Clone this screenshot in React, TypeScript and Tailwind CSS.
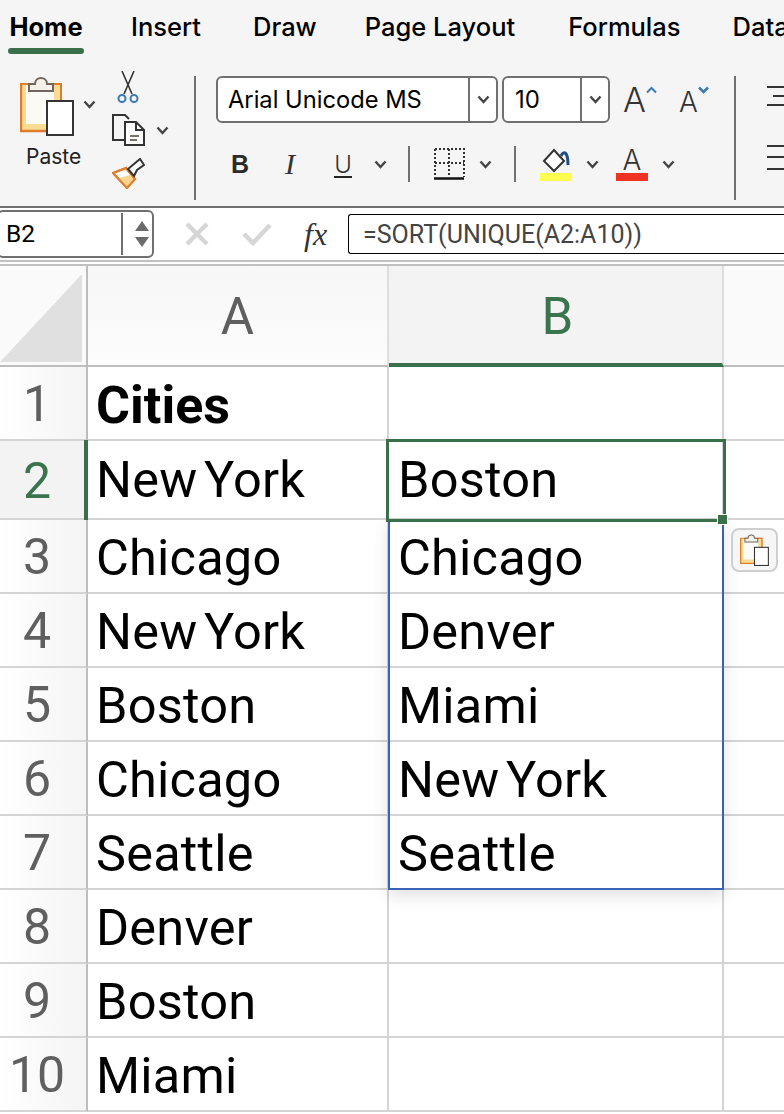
import React from "react";

const Chevron = ({ className = "" }: { className?: string }) => (
  <svg width="13" height="9" viewBox="0 0 13 9" className={className} fill="none">
    <path d="M1.5 1.5 L6.5 7 L11.5 1.5" stroke="#444" strokeWidth="2.4" />
  </svg>
);

const PasteIcon = ({ w, h }: { w: number; h: number }) => (
  <svg width={w} height={h} viewBox="0 0 54 60" fill="none" className="block">
    <rect x="1" y="8" width="40" height="47" fill="#fbfaf4" stroke="#e0802f" strokeWidth="2" />
    <path d="M2 9 H6 V48 H40 V54 H2 Z" fill="#f9dc93" />
    <path d="M34 9 H40 V26 H34 Z" fill="#f9dc93" />
    <path d="M1 8 V55 H41" stroke="#df7c2c" strokeWidth="2.4" />
    <path d="M34 8 H41 V25" stroke="#df7c2c" strokeWidth="2" />
    <path d="M9 15 V8 H15 C15 0 27 0 27 8 H33 V15 Z" fill="#f5f1ea" stroke="#70665d" strokeWidth="2" />
    <rect x="27" y="25" width="26" height="34" fill="#fff" stroke="#333" strokeWidth="2" />
  </svg>
);

const Scissors = () => (
  <svg width="22" height="34" viewBox="0 0 22 34" fill="none" className="block">
    <path d="M5 0 L15 23 M17 0 L7 23" stroke="#333" strokeWidth="1.6" />
    <circle cx="5" cy="27.500" r="3.500" stroke="#3b79b7" strokeWidth="2" />
    <circle cx="17" cy="27.500" r="3.500" stroke="#3b79b7" strokeWidth="2" />
  </svg>
);

const CopyIcon = () => (
  <svg width="33" height="33" viewBox="0 0 33 33" fill="none" className="block">
    <path d="M12 26 H1 V1 H13 L17 5" stroke="#333" strokeWidth="2" />
    <path d="M13 8 H24 L32 16 V31 H13 Z" fill="#fff" stroke="#333" strokeWidth="2" />
    <path d="M24 8 V16 H32" stroke="#333" strokeWidth="2" />
    <path d="M18 22 H27 M18 26 H25" stroke="#7a7065" strokeWidth="2" />
  </svg>
);

const Brush = () => (
  <svg width="33" height="31" viewBox="0 0 33 31" fill="none" className="block">
    <path d="M1 15 L14 10 L23 21 L15 30 Z" fill="#fff" stroke="#e07f2e" strokeWidth="2" />
    <path d="M7 20 L18 17 L22 21 L15 29 Z" fill="#fbd48e" />
    <path d="M1 15 L14 10 L23 21 L15 30 Z" stroke="#e07f2e" strokeWidth="2" />
    <path d="M16 11 L22 18 L25 12 L32 7 L28 1 L22 6 Z" fill="#fff" stroke="#333" strokeWidth="2" />
  </svg>
);

const BorderIcon = () => (
  <svg width="32" height="32" viewBox="0 0 32 32" fill="none" className="block">
    <path d="M2 1 H31 V29 M2 1 V29 M2 15 H31 M16 1 V29" stroke="#333" strokeWidth="2" strokeDasharray="2 2" />
    <path d="M1 30.500 H31" stroke="#111" strokeWidth="2.500" />
  </svg>
);

const FillIcon = () => (
  <svg width="28" height="26" viewBox="0 0 28 26" fill="none" className="block">
    <path d="M2 13 L12 2 L22 13 L12 23 Z" fill="#fff" stroke="#333" strokeWidth="2" />
    <path d="M19 8 C22 2 26 4 26 17" stroke="#1f4e86" strokeWidth="3" />
  </svg>
);

const Sep = ({ className = "" }: { className?: string }) => <div className={`w-[2px] bg-[#707070] ${className}`} />;

const RibbonTab = ({ label, className }: { label: string; className: string }) => (
  <span className={`text-[25.500px] leading-[30px] font-medium text-black whitespace-nowrap shrink-0 ${className}`}>{label}</span>
);

const Ribbon = () => (
  <div className="h-[206px] bg-[#f5f5f5] overflow-hidden font-['Inter',sans-serif]">
    <div className="flex h-[54px] items-start pt-[12px]">
      <div className="ml-[8px] w-[76px] shrink-0 flex flex-col items-center">
        <span className="text-[25.500px] leading-[30px] font-bold text-black">Home</span>
        <div className="mt-[6px] h-[6px] w-[76px] rounded-full bg-[#3a7049]" />
      </div>
      <RibbonTab label="Insert" className="ml-[47px]" />
      <RibbonTab label="Draw" className="ml-[52px]" />
      <RibbonTab label="Page Layout" className="ml-[48px]" />
      <RibbonTab label="Formulas" className="ml-[53px]" />
      <RibbonTab label="Data" className="ml-[52px]" />
    </div>
    <div className="flex items-start pt-[22px]">
      <div className="flex w-[194px] h-[124px] shrink-0">
        <div className="ml-[20px] w-[62px] shrink-0 flex flex-col">
          <PasteIcon w={54} h={60} />
          <span className="ml-[6px] mt-[8px] text-[21px] leading-[26px] text-[#222]">Paste</span>
        </div>
        <Chevron className="mt-[24px] ml-[1px] shrink-0" />
        <div className="ml-[16px] flex flex-col">
          <div className="ml-[5px] -mt-[5px]"><Scissors /></div>
          <div className="flex items-center mt-[9px]">
            <CopyIcon />
            <Chevron className="ml-[11px]" />
          </div>
          <div className="mt-[11px]"><Brush /></div>
        </div>
      </div>
      <Sep className="h-[124px] shrink-0" />
      <div className="ml-[20px] flex flex-col w-[518px] shrink-0">
        <div className="flex items-center h-[47px]">
          <div className="flex h-[47px] w-[282px] rounded-[6px] border-2 border-[#707070] bg-white">
            <span className="flex-1 pl-[10px] text-[23.700px] leading-[43px] text-black whitespace-nowrap overflow-hidden">Arial Unicode MS</span>
            <div className="w-[28px] border-l-2 border-[#707070] flex items-center justify-center"><Chevron /></div>
          </div>
          <div className="ml-[4px] flex h-[47px] w-[108px] rounded-[6px] border-2 border-[#707070] bg-white">
            <span className="flex-1 pl-[11px] text-[24px] leading-[43px] text-black">10</span>
            <div className="w-[28px] border-l-2 border-[#707070] flex items-center justify-center"><Chevron /></div>
          </div>
          <div className="ml-[13px] flex items-start h-[30px]">
            <span className="text-[34px] leading-[30px] font-light text-[#333]">A</span>
            <svg width="11" height="8" viewBox="0 0 11 8" fill="none" className="mt-[1px]"><path d="M1 6.500 L5.500 2 L10 6.500" stroke="#3b79b7" strokeWidth="2" /></svg>
          </div>
          <div className="ml-[22px] flex items-start h-[30px]">
            <span className="text-[28px] leading-[34px] font-light text-[#333]">A</span>
            <svg width="11" height="8" viewBox="0 0 11 8" fill="none" className="mt-[1px]"><path d="M1 1.500 L5.500 6 L10 1.500" stroke="#3b79b7" strokeWidth="2.500" /></svg>
          </div>
        </div>
        <div className="flex items-center h-[36px] mt-[23px]">
          <span className="ml-[15px] w-[18px] font-['Liberation_Sans',sans-serif] text-[25px] leading-[30px] font-bold text-[#2b2b2b]">B</span>
          <span className="ml-[36px] w-[16px] font-['Liberation_Serif',serif] text-[30px] leading-[30px] italic text-[#333]">I</span>
          <span className="ml-[33px] mt-[3px] w-[18px] text-[24px] leading-[23px] font-light text-[#333] border-b-2 border-[#222] h-[25px] flex justify-center">U</span>
          <Chevron className="ml-[22px]" />
          <Sep className="ml-[21px] h-[36px]" />
          <div className="ml-[23px]"><BorderIcon /></div>
          <Chevron className="ml-[14px]" />
          <Sep className="ml-[22px] h-[36px]" />
          <div className="ml-[24px] w-[32px] flex flex-col items-center">
            <FillIcon />
            <div className="h-[8px] w-[32px] bg-[#fdfd51] -mt-[1px]" />
          </div>
          <Chevron className="ml-[14px]" />
          <div className="ml-[17px] w-[32px] flex flex-col items-center">
            <span className="text-[28px] leading-[26px] font-light text-[#333]">A</span>
            <div className="h-[8px] w-[32px] bg-[#ee3224]" />
          </div>
          <Chevron className="ml-[14px]" />
        </div>
      </div>
      <Sep className="h-[124px] shrink-0" />
      <div className="ml-[31px] flex flex-col">
        <svg width="20" height="24" viewBox="0 0 20 24" fill="none" className="mt-[8px]"><path d="M0 3 H20 M6 12 H20 M0 21 H20" stroke="#333" strokeWidth="2" /></svg>
        <svg width="20" height="28" viewBox="0 0 20 28" fill="none" className="mt-[36px]"><path d="M0 2 H20 M0 13 H20 M0 25 H20" stroke="#333" strokeWidth="2" /></svg>
      </div>
    </div>
  </div>
);

const FormulaBar = () => (
  <div className="h-[60px] bg-white border-t-2 border-[#707070] flex flex-col overflow-hidden">
    <div className="flex h-[52px] items-center shrink-0 overflow-hidden">
      <div className="-ml-[3px] w-[157px] h-[48px] shrink-0 flex rounded-[6px] border-2 border-[#707070] bg-white">
        <span className="w-[124px] pl-[7px] font-['Roboto',sans-serif] text-[24.500px] leading-[42px] text-black border-r-2 border-[#707070] my-[1px]">B2</span>
        <div className="flex-1 flex flex-col items-center justify-center gap-[6px] pl-[8px]">
          <svg width="14" height="10" viewBox="0 0 14 10"><path d="M7 0 L14 10 H0 Z" fill="#6b6b6b" /></svg>
          <svg width="14" height="10" viewBox="0 0 14 10"><path d="M7 10 L14 0 H0 Z" fill="#6b6b6b" /></svg>
        </div>
      </div>
      <svg width="24" height="24" viewBox="0 0 24 24" fill="none" className="ml-[31px] shrink-0"><path d="M2 2 L22 22 M22 2 L2 22" stroke="#d6d6d6" strokeWidth="4.500" /></svg>
      <svg width="30" height="24" viewBox="0 0 30 24" fill="none" className="ml-[33px] shrink-0"><path d="M2 12 L11 21 L28 3" stroke="#d6d6d6" strokeWidth="4.500" /></svg>
      <span className="ml-[32px] w-[44px] shrink-0 font-['Liberation_Serif',serif] italic text-[32px] leading-[40px] text-[#333]">fx</span>
      <div className="flex-1 h-[40px] border border-black rounded-l-[3px] border-r-0 pl-[14px] font-['Roboto',sans-serif] text-[25px] leading-[40px] text-[#444] whitespace-nowrap">=SORT(UNIQUE(A2:A10))</div>
    </div>
    <div className="h-[2px] bg-[#c0c0c0] shrink-0" />
    <div className="h-[2px] mt-[2px] bg-[#c0c0c0] shrink-0" />
  </div>
);

const colA = ["Cities", "New York", "Chicago", "New York", "Boston", "Chicago", "Seattle", "Denver", "Boston", "Miami"];
const colB = ["", "Boston", "Chicago", "Denver", "Miami", "New York", "Seattle", "", "", ""];

const Sheet = () => (
  <div className="relative font-['Roboto',sans-serif]">
    <div className="grid grid-cols-[88px_301px_335px_60px] grid-rows-[101px_74px_79px_repeat(8,74px)]">
      <div className="relative border-r-2 border-b-2 border-[#bdbdbd] bg-[#fafafa] flex items-end">
        <svg width="82" height="88" viewBox="0 0 82 88" className="mb-[3px]"><path d="M82 0 V88 H0 Z" fill="#e0e0e0" /></svg>
      </div>
      <div className="border-r-2 border-b-2 border-[#bdbdbd] border-r-[#dedede] bg-linear-to-b from-[#f7f7f7] to-[#fcfcfc] flex items-center justify-center pt-[4px] text-[51px] text-[#5f5f5f]">A</div>
      <div className="border-r-2 border-[#dedede] border-b-4 border-b-[#3a7049] bg-[#f3f3f3] flex items-center justify-center pt-[6px] pl-[4px] text-[51px] text-[#39744c]">B</div>
      <div className="border-b-2 border-[#bdbdbd] bg-[#fafafa]" />
      {colA.map((a, i) => (
        <React.Fragment key={i}>
          <div className={`flex items-center justify-center pr-[12px] pt-[3px] border-r-2 border-b-2 border-[#d4d4d4] border-r-[#bdbdbd] text-[50px] ${i === 1 ? "bg-[#f3f3f3] text-[#39744c]" : "bg-linear-to-r from-white to-[#f4f4f4] text-[#5f5f5f]"}`}>
            {i + 1}
          </div>
          <div className={`flex items-center pl-[8px] border-r-2 border-b-2 border-[#d4d4d4] text-black whitespace-nowrap ${i === 0 ? "font-bold text-[52px] pt-[6px]" : i === 1 ? "text-[50.500px] tracking-[0.2px] [word-spacing:-6px]" : "pt-[3px] text-[50.500px] tracking-[0.2px] [word-spacing:-6px]"}`}>{a}</div>
          <div className={`flex items-center pl-[9px] border-r-2 border-b-2 border-[#d4d4d4] text-[50.500px] tracking-[0.2px] [word-spacing:-6px] text-black whitespace-nowrap ${i === 1 ? "pt-[1px]" : "pt-[3px]"}`}>{colB[i]}</div>
          <div className="border-b-2 border-[#d4d4d4]" />
        </React.Fragment>
      ))}
    </div>
    <div className="absolute left-[84px] top-[174px] h-[80px] w-[4px] bg-[#3a7049]" />
    <div className="absolute left-[388px] top-[254px] h-[370px] w-[336px] border-2 border-t-0 border-[#3a63b8] shadow-[0_6px_16px_rgba(0,0,0,0.12)]" />
    <div className="absolute left-[386px] top-[173px] h-[83px] w-[340px] border-[3px] border-[#3a7049]" />
    <div className="absolute left-[717px] top-[248px] h-[11px] w-[11px] bg-[#3a7049] border border-white" />
    <div className="absolute left-[731px] top-[262px] h-[44px] w-[47px] rounded-[8px] border-2 border-[#cfcfcf] bg-[#f6f6f6] flex items-center justify-center">
      <PasteIcon w={29} h={32} />
    </div>
  </div>
);

export default function App() {
  return (
    <div className="w-[784px] h-[1114px] overflow-hidden bg-white">
      <Ribbon />
      <FormulaBar />
      <Sheet />
    </div>
  );
}
